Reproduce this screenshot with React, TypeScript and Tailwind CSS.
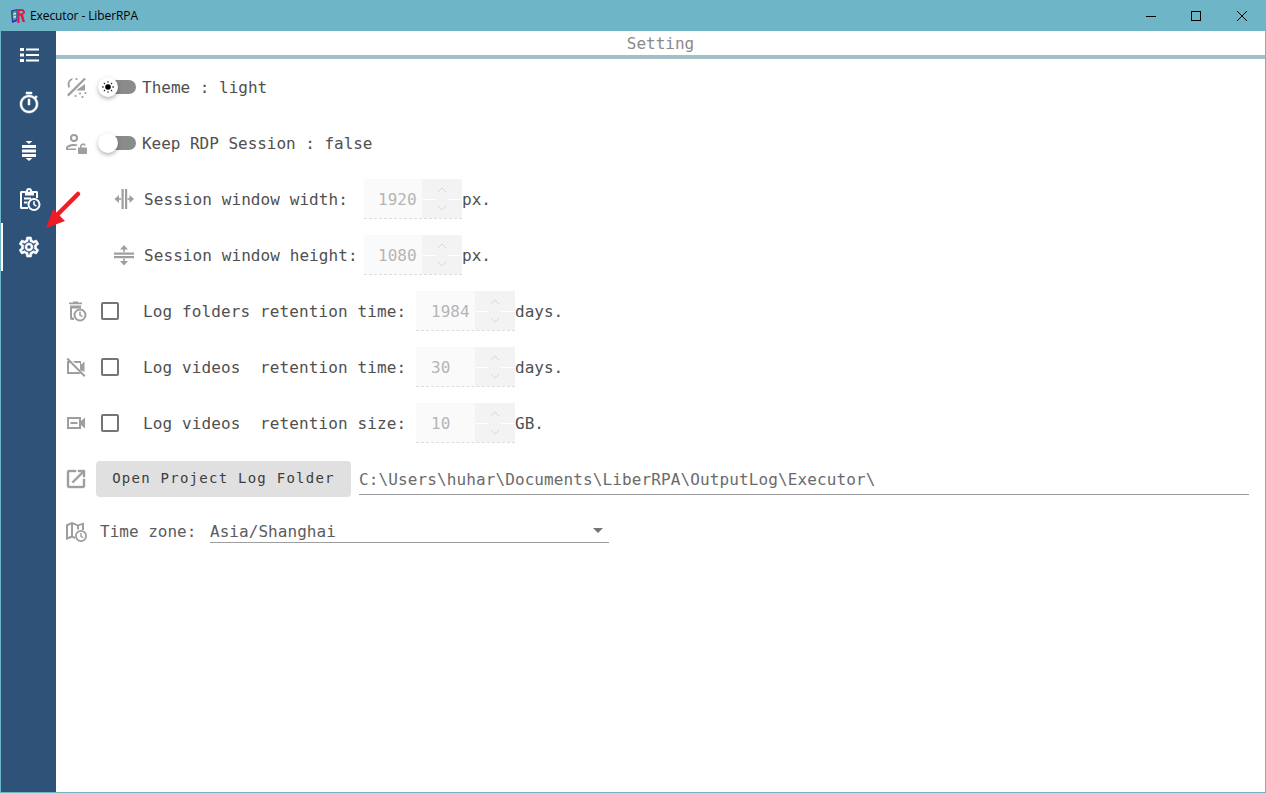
import type { ReactNode } from 'react';

const mono = "font-['DejaVu_Sans_Mono','Liberation_Mono',monospace]";

function ListIcon() {
  return (
    <svg width="24" height="24" viewBox="0 0 24 24" fill="currentColor">
      <rect x="3" y="5" width="4" height="3" />
      <rect x="9" y="5.500" width="13" height="2" />
      <rect x="3" y="10.500" width="4" height="3" />
      <rect x="9" y="11" width="13" height="2" />
      <rect x="3" y="16" width="4" height="3" />
      <rect x="9" y="16.500" width="13" height="2" />
    </svg>
  );
}

function TimerIcon() {
  return (
    <svg width="24" height="24" viewBox="0 0 24 24" fill="currentColor" stroke="currentColor" strokeWidth="0.5">
      <path d="M15 1H9v2h6V1zm-4 13h2V8h-2v6zm8.030-6.610l1.420-1.420c-.43-.51-.9-.99-1.410-1.410l-1.420 1.420C16.070 4.740 14.120 4 12 4c-4.970 0-9 4.030-9 9s4.020 9 9 9 9-4.030 9-9c0-2.120-.74-4.070-1.970-5.610zM12 20c-3.870 0-7-3.130-7-7s3.130-7 7-7 7 3.130 7 7-3.130 7-7 7z" />
    </svg>
  );
}

function SettingsIcon() {
  return (
    <svg width="24" height="24" viewBox="0 0 24 24" fill="currentColor" stroke="currentColor" strokeWidth="0.6">
      <path d="M19.430 12.980c.04-.32.07-.64.07-.98 0-.34-.03-.66-.07-.98l2.110-1.650c.19-.15.24-.42.12-.64l-2-3.460c-.09-.16-.26-.25-.44-.25-.06 0-.12.01-.17.03l-2.490 1c-.52-.4-1.080-.73-1.690-.98l-.38-2.650C14.460 2.180 14.250 2 14 2h-4c-.25 0-.46.18-.49.42l-.38 2.650c-.61.25-1.170.59-1.690.98l-2.490-1c-.06-.02-.12-.03-.18-.03-.17 0-.34.09-.43.25l-2 3.460c-.13.22-.07.49.12.64l2.110 1.650c-.04.32-.07.65-.07.98 0 .33.03.66.07.98l-2.110 1.650c-.19.15-.24.42-.12.64l2 3.460c.09.16.26.25.44.25.06 0 .12-.01.17-.03l2.490-1c.52.4 1.080.73 1.690.98l.38 2.650c.03.24.24.42.49.42h4c.25 0 .46-.18.49-.42l.38-2.650c.61-.25 1.170-.59 1.690-.98l2.490 1c.06.02.12.03.18.03.17 0 .34-.09.43-.25l2-3.460c.12-.22.07-.49-.12-.64l-2.110-1.650zm-1.980-1.710c.04.31.05.52.05.73 0 .21-.02.43-.05.73l-.14 1.130.89.7 1.080.84-.7 1.210-1.270-.51-1.040-.42-.9.68c-.43.32-.84.56-1.250.73l-1.060.43-.16 1.130-.2 1.350h-1.400l-.19-1.350-.16-1.130-1.060-.43c-.43-.18-.83-.41-1.230-.71l-.91-.7-1.060.43-1.270.51-.7-1.210 1.080-.84.89-.7-.14-1.130c-.03-.31-.05-.54-.05-.74s.02-.43.05-.73l.14-1.130-.89-.7-1.080-.84.7-1.210 1.270.51 1.040.42.9-.68c.43-.32.84-.56 1.250-.73l1.060-.43.16-1.130.2-1.350h1.390l.19 1.350.16 1.130 1.060.43c.43.18.83.41 1.230.71l.91.7 1.060-.43 1.270-.51.7 1.210-1.070.85-.89.7.14 1.130zM12 8c-2.210 0-4 1.790-4 4s1.790 4 4 4 4-1.790 4-4-1.790-4-4-4zm0 6c-1.100 0-2-.9-2-2s.9-2 2-2 2 .9 2 2-.9 2-2 2z" />
    </svg>
  );
}

function OpenIcon() {
  return (
    <svg width="24" height="24" viewBox="0 0 24 24" fill="currentColor" stroke="currentColor" strokeWidth="0.4">
      <path d="M19 19H5V5h7V3H5c-1.110 0-2 .9-2 2v14c0 1.100.89 2 2 2h14c1.100 0 2-.9 2-2v-7h-2v7zM14 3v2h3.590l-9.830 9.830 1.410 1.410L19 6.410V10h2V3h-7z" />
    </svg>
  );
}

function SpacingIcon() {
  return (
    <svg width="24" height="24" viewBox="0 0 24 24" fill="currentColor">
      <path d="M8.500 2h7L12 5z" />
      <rect x="5" y="6" width="14" height="3" />
      <rect x="5" y="10.500" width="14" height="3" />
      <rect x="5" y="15" width="14" height="3" />
      <path d="M8.500 19h7L12 22z" />
    </svg>
  );
}

function ClipboardClockIcon() {
  return (
    <svg width="24" height="24" viewBox="0 0 24 24" fill="currentColor">
      <path d="M4.500 4H9a3 3 0 0 1 6 0h4.500c.9 0 1.500.6 1.500 1.500V11h-2V6h-2v2.500H8V6H5v14h6v2H4.500C3.600 22 3 21.400 3 20.500v-15C3 4.600 3.600 4 4.500 4zM12 3a1 1 0 1 0 0 2 1 1 0 0 0 0-2z" />
      <rect x="7" y="10.500" width="7" height="2" />
      <rect x="7" y="14.500" width="3.500" height="2" />
      <path d="M17 11a6.500 6.500 0 1 1 0 13 6.500 6.500 0 0 1 0-13zm0 2a4.500 4.500 0 1 0 0 9 4.500 4.500 0 0 0 0-9zm-.8 1.200h1.600v3l2 1.200-.8 1.300-2.800-1.700z" />
    </svg>
  );
}

function ThemeIcon() {
  return (
    <svg width="24" height="24" viewBox="0 0 24 24" fill="currentColor">
      <path d="M9 3a6.500 6.500 0 0 0-4.300 10l1.500-1.500A4.500 4.500 0 0 1 7.900 5z" />
      <path d="M3 19.800 20.300 2.700l1.600 1.600L4.600 21.400z" />
      <path d="M21 9v6.500h-9z" />
      <circle cx="12.500" cy="4" r="1.100" />
      <circle cx="16" cy="18.500" r="1.100" />
      <circle cx="21.500" cy="18" r="1.100" />
      <circle cx="18.500" cy="22" r="1.100" />
      <circle cx="11.500" cy="21" r="1.100" />
    </svg>
  );
}

function PersonLockIcon() {
  return (
    <svg width="24" height="24" viewBox="0 0 24 24" fill="currentColor">
      <path d="M10 3a4 4 0 1 1 0 8 4 4 0 0 1 0-8zm0 2a2 2 0 1 0 0 4 2 2 0 0 0 0-4z" />
      <path d="M2 19v-2c0-2.600 4.600-4 8-4 1.200 0 2.400.2 3.500.5l-1 1.700c-.8-.1-1.600-.2-2.500-.2-3 0-6 1.200-6 2v.5h8V19z" />
      <path d="M15 16.500h1v-1.200a3 3 0 0 1 5.800-1l-1.500.5a1.400 1.400 0 0 0-2.700.5v1.200h4.400c.5 0 1 .5 1 1V22c0 .5-.5 1-1 1H15c-.5 0-1-.5-1-1v-4.500c0-.5.5-1 1-1z" />
    </svg>
  );
}

function WidthIcon() {
  return (
    <svg width="24" height="24" viewBox="0 0 24 24" fill="currentColor">
      <rect x="9.500" y="2" width="2.200" height="20" />
      <rect x="13" y="2" width="2.200" height="20" />
      <path d="M2.500 12 7 8v8zM22 12l-4.500-4v8z" />
      <rect x="6" y="11.200" width="3" height="1.600" />
      <rect x="15.500" y="11.200" width="3" height="1.600" />
    </svg>
  );
}

function HeightIcon() {
  return (
    <svg width="24" height="24" viewBox="0 0 24 24" fill="currentColor">
      <rect x="2" y="9.500" width="20" height="2.200" />
      <rect x="2" y="13" width="20" height="2.200" />
      <path d="M12 2 8 6.500h8zM12 22.500l-4-4.500h8z" />
      <rect x="11.200" y="6" width="1.600" height="3" />
      <rect x="11.200" y="15.500" width="1.600" height="3" />
    </svg>
  );
}

function TrashClockIcon() {
  return (
    <svg width="24" height="24" viewBox="0 0 24 24" fill="currentColor">
      <path d="M5 3.500h4V2.500h5v1h4v1.800H5z" />
      <path d="M6 6.500h11V9.500H8v9h2V21H8c-1.200 0-2-.8-2-2z" />
      <path d="M16 9.500a6.500 6.500 0 1 1 0 13 6.500 6.500 0 0 1 0-13zm0 2a4.500 4.500 0 1 0 0 9 4.500 4.500 0 0 0 0-9zm-.8 1h1.600v3.200l2.100 1.300-.8 1.300-2.900-1.800z" />
    </svg>
  );
}

function VideoOffIcon() {
  return (
    <svg width="24" height="24" viewBox="0 0 24 24" fill="currentColor">
      <path d="M3 6h3l2 2H5v9h10l2 2H3z" />
      <path d="M9 6h8v3.500l3.500-3V17L18 15.500v1L16 14.500V8h-5z" />
      <path d="M2.500 4.200 3.900 2.800 21.500 20.500l-1.400 1.400z" />
    </svg>
  );
}

function VideoIcon() {
  return (
    <svg width="24" height="24" viewBox="0 0 24 24" fill="currentColor">
      <path d="M3 6h14v4l4-3.500v11L17 14v4H3zm2 2v8h10V8z" />
      <rect x="6.500" y="11" width="7" height="2" />
    </svg>
  );
}

function MapClockIcon() {
  return (
    <svg width="24" height="24" viewBox="0 0 24 24" fill="currentColor">
      <path d="M2 5.500 8 3l6 2.500L20 3.500V11h-2V6l-3 1v3.500h-2V7L9 5.400V17l2 .8v2.100L8 18.700 2 21zM4 7v11l3-1.200V5.600z" />
      <path d="M17 11a6 6 0 1 1 0 12 6 6 0 0 1 0-12zm0 1.800a4.200 4.200 0 1 0 0 8.400 4.200 4.200 0 0 0 0-8.400zM16.300 14h1.400v3l2 1.200-.7 1.100-2.700-1.600z" />
    </svg>
  );
}

function LogoIcon() {
  return (
    <svg width="14" height="16" viewBox="0 0 14 16">
      <path d="M0 2.500 6.500 1v12L1 15z" fill="#3a2fb5" />
      <path d="M1.500 3.500 5.500 2.500v9l-3.500 1z" fill="#35b56f" />
      <path d="M2.500 5.500l2.500-.6v1.400l-2.500.6zM2.500 8.500l2.500-.6v1.400l-2.500.6z" fill="#e8f0f0" />
      <path d="M6.500 1H11a3 3 0 0 1 1 5.800L14 14h-2.500L9.500 7.500h-1V15h-2z" fill="#d81b4a" />
      <path d="M8.500 3v2.500h2a1.200 1.200 0 0 0 0-2.500z" fill="#6fb5c8" />
    </svg>
  );
}

function SunIcon() {
  return (
    <svg width="12" height="12" viewBox="0 0 12 12" fill="black">
      <circle cx="6" cy="6" r="2.800" />
      <path d="M5.600 0h.8v1.800h-.8zM5.600 10.200h.8V12h-.8zM0 5.600h1.800v.8H0zM10.200 5.600H12v.8h-1.800zM1.500 2.100l.6-.6 1.300 1.300-.6.6zM8.600 9.200l.6-.6 1.300 1.300-.6.6zM1.500 9.900l1.300-1.300.6.6-1.300 1.300zM8.600 2.800l1.300-1.300.6.6-1.300 1.300z" />
    </svg>
  );
}

function Toggle({ sun }: { sun?: boolean }) {
  return (
    <div className="relative ml-[2px] h-[14px] w-[36px] rounded-full bg-[#8b8b8b]">
      <div className="absolute left-[-2px] top-[-3px] flex h-[20px] w-[20px] items-center justify-center rounded-full bg-white shadow-[0_2px_4px_rgba(0,0,0,0.3)]">
        {sun && <SunIcon />}
      </div>
    </div>
  );
}

function Checkbox() {
  return <div className="h-[18px] w-[18px] rounded-[2px] border-2 border-[#757575]" />;
}

function Stepper({ value, width, inset }: { value: string; width: string; inset: string }) {
  return (
    <div className={`flex h-[40px] ${width} border-b border-dashed border-[#dcdcdc]`}>
      <div className={`flex flex-1 items-center bg-[#fafafa] pt-[2px] ${inset} text-[16px] text-[#b5b5b5]`}>{value}</div>
      <div className="relative flex w-[40px] flex-col items-center justify-center gap-[12px] bg-[#f3f3f3]">
        <svg width="10" height="6" viewBox="0 0 10 6" fill="none" stroke="#d9d9d9">
          <path d="M1 5l4-4 4 4" />
        </svg>
        <svg width="10" height="6" viewBox="0 0 10 6" fill="none" stroke="#d9d9d9">
          <path d="M1 1l4 4 4-4" />
        </svg>
        {/* broken white divider between the two arrows */}
        <div className="absolute inset-x-0 top-[20px] flex h-[1px] justify-between">
          <div className="w-[14px] bg-white" />
          <div className="w-[14px] bg-white" />
        </div>
      </div>
    </div>
  );
}

function Row({ children, height = 'h-[56px]' }: { children: ReactNode; height?: string }) {
  return <div className={`flex items-center ${height}`}>{children}</div>;
}

function RowIcon({ children }: { children: ReactNode }) {
  return <div className="flex w-[24px] shrink-0 justify-center text-[#9e9e9e]">{children}</div>;
}

const navItems = [
  { key: 'list', icon: <ListIcon /> },
  { key: 'timer', icon: <TimerIcon /> },
  { key: 'spacing', icon: <SpacingIcon /> },
  { key: 'pending', icon: <ClipboardClockIcon /> },
  { key: 'settings', icon: <SettingsIcon />, active: true },
];

const logRows = [
  { icon: <TrashClockIcon />, label: 'Log folders retention time:', value: '1984', unit: 'days.' },
  { icon: <VideoOffIcon />, label: 'Log videos  retention time:', value: '30', unit: 'days.' },
  { icon: <VideoIcon />, label: 'Log videos  retention size:', value: '10', unit: 'GB.' },
];

export default function App() {
  return (
    <div className={`relative flex h-screen w-full flex-col overflow-hidden bg-[#6fb5c8] ${mono}`}>
      {/* title bar */}
      <div className="flex h-[31px] shrink-0 items-center text-black">
        <div className="ml-[11px] mr-[5px] flex w-[14px] justify-center">
          <LogoIcon />
        </div>
        <span className="font-['Open_Sans',sans-serif] text-[12px] tracking-[-0.1px]">Executor - LiberRPA</span>
        <div className="ml-auto flex items-center">
          <svg width="10" height="10" viewBox="0 0 10 10" className="mr-[35px]" stroke="black" fill="none">
            <path d="M0 5.500h10" />
          </svg>
          <svg width="10" height="10" viewBox="0 0 10 10" className="mr-[36px]" stroke="black" fill="none">
            <rect x="0.500" y="0.500" width="9" height="9" />
          </svg>
          <svg width="10" height="10" viewBox="0 0 10 10" className="mr-[19px]" stroke="black" fill="none">
            <path d="M0 0l10 10M10 0L0 10" />
          </svg>
        </div>
      </div>

      <div className="mx-[1px] mb-[1px] flex min-h-0 flex-1">
        {/* side nav */}
        <div className="flex w-[55px] shrink-0 flex-col bg-[#2f5279] text-white">
          {navItems.map((item) => (
            <div
              key={item.key}
              className={`flex h-[48px] items-center justify-center ${item.active ? 'border-l-2 border-white pr-[2px]' : ''}`}
            >
              {item.icon}
            </div>
          ))}
        </div>

        <div className="flex min-w-0 flex-1 flex-col bg-white">
          <div className="h-[28px] border-b-[4px] border-[#a0bfc6] text-center text-[16px] leading-[26px] text-[#8a8a8a]">
            Setting
          </div>

          <div className="pl-[8px] pr-[16px] text-[16px] text-[#505050]">
            <Row>
              <RowIcon>
                <ThemeIcon />
              </RowIcon>
              <div className="ml-[10px] mr-[6px]">
                <Toggle sun />
              </div>
              <span className="pt-[2px]">Theme : light</span>
            </Row>
            <Row>
              <RowIcon>
                <PersonLockIcon />
              </RowIcon>
              <div className="ml-[10px] mr-[6px]">
                <Toggle />
              </div>
              <span className="pt-[2px] tracking-[-0.03px]">Keep RDP Session : false</span>
            </Row>
            <Row>
              <div className="ml-[48px] mr-[8px]">
                <RowIcon>
                  <WidthIcon />
                </RowIcon>
              </div>
              <span className="w-[220px] pt-[2px] tracking-[0.08px]">Session window width:</span>
              <Stepper value="1920" width="w-[98px]" inset="pl-[14px]" />
              <span className="pt-[2px]">px.</span>
            </Row>
            <Row>
              <div className="ml-[48px] mr-[8px]">
                <RowIcon>
                  <HeightIcon />
                </RowIcon>
              </div>
              <span className="w-[220px] pt-[2px] tracking-[0.08px]">Session window height:</span>
              <Stepper value="1080" width="w-[98px]" inset="pl-[14px]" />
              <span className="pt-[2px]">px.</span>
            </Row>
            {logRows.map((row) => (
              <Row key={row.label}>
                <RowIcon>{row.icon}</RowIcon>
                <div className="ml-[13px] mr-[24px]">
                  <Checkbox />
                </div>
                <span className="w-[273px] whitespace-pre pt-[2px] tracking-[0.12px]">{row.label}</span>
                <Stepper value={row.value} width="w-[99px]" inset="pl-[15px]" />
                <span className="pt-[2px]">{row.unit}</span>
              </Row>
            ))}
            <Row>
              <RowIcon>
                <OpenIcon />
              </RowIcon>
              <button className="ml-[8px] h-[36px] w-[255px] rounded-[4px] bg-[#e0e0e0] pb-[2px] text-[14px] tracking-[1.25px] text-[#3d3d3d]">
                Open Project Log Folder
              </button>
              <div className="ml-[8px] flex h-[32px] flex-1 items-center border-b border-[#9e9e9e] pt-[2px] tracking-[0.11px] text-[#6b6b6b]">
                C:\Users\huhar\Documents\LiberRPA\OutputLog\Executor\
              </div>
            </Row>
            <Row height="h-[48px]">
              <RowIcon>
                <MapClockIcon />
              </RowIcon>
              <span className="ml-[12px] w-[110px] pt-[2px] text-[#5c5c5c]">Time zone:</span>
              <div className="flex h-[24px] w-[399px] items-center justify-between border-b border-[#9e9e9e] pr-[6px] text-[#5c5c5c]">
                <span className="pt-[2px] tracking-[0.05px]">Asia/Shanghai</span>
                <div className="h-0 w-0 border-x-[5px] border-t-[5px] border-x-transparent border-t-[#757575]" />
              </div>
            </Row>
          </div>
        </div>
      </div>

      {/* annotation arrow over the settings item */}
      <svg className="absolute left-[40px] top-[188px]" width="46" height="46" viewBox="0 0 46 46">
        <path d="M38 6 18 26" stroke="#ee1c25" strokeWidth="4.500" strokeLinecap="round" />
        <path d="M6 40 13 21l12 12z" fill="#ee1c25" />
      </svg>
    </div>
  );
}
